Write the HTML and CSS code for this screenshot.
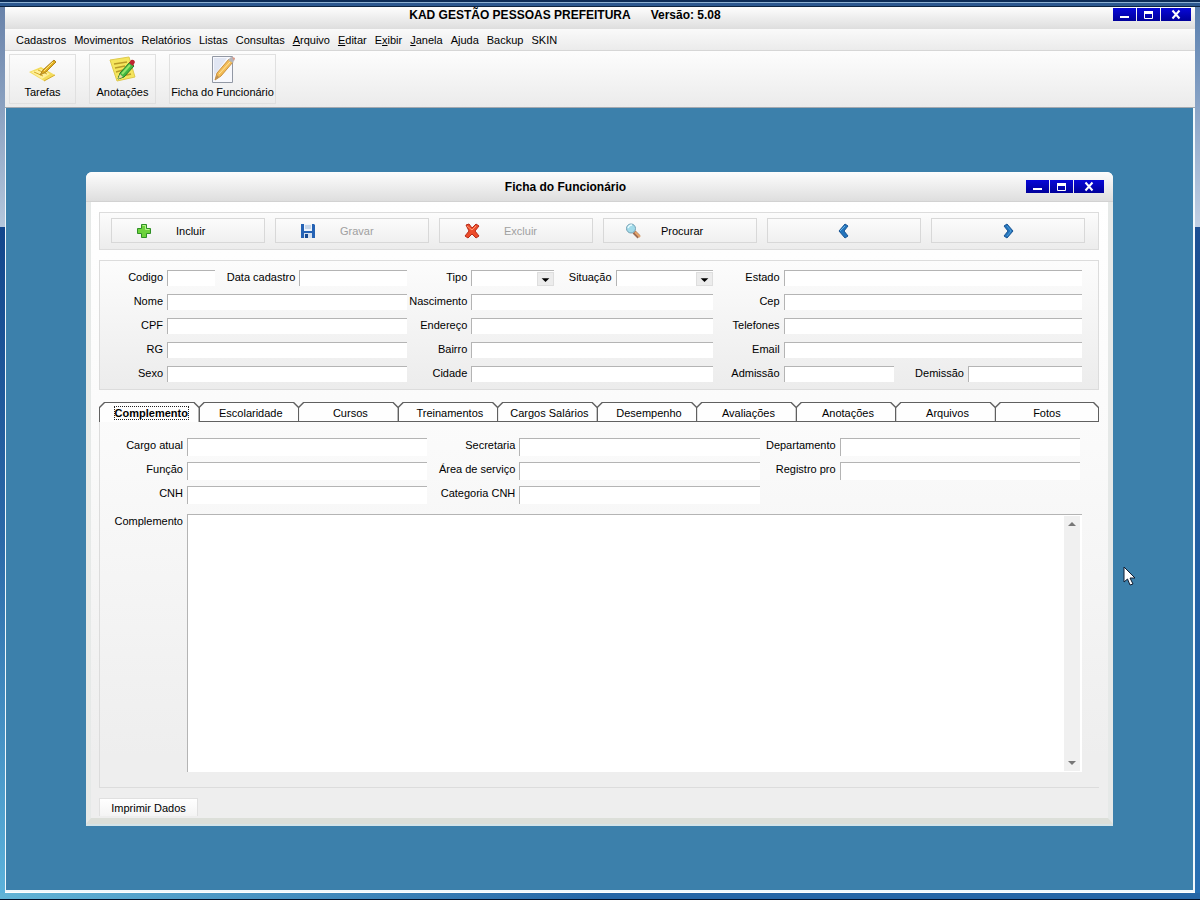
FILE: index.html
```html
<!DOCTYPE html>
<html lang="pt-BR">
<head>
<meta charset="utf-8">
<title>KAD Gestão Pessoas Prefeitura</title>
<link rel="stylesheet" href="styles.css">
</head>
<body>
<div class="app">
  <header class="titlebar">
    <h1 class="title"><span>KAD GESTÃO PESSOAS PREFEITURA</span><span>Versão: 5.08</span></h1>
    <div class="controls">
      <button class="control" type="button" aria-label="Minimizar"><svg width="23" height="13" viewBox="0 0 23 13"><path d="M7 9h9" stroke="#fff" stroke-width="2"/></svg></button>
      <button class="control" type="button" aria-label="Maximizar"><svg width="23" height="13" viewBox="0 0 23 13"><path d="M7.500 3v7.500h8V3" fill="none" stroke="#fff"/><path d="M7 4.500h9" stroke="#fff" stroke-width="3"/></svg></button>
      <button class="control close" type="button" aria-label="Fechar"><svg width="30" height="13" viewBox="0 0 30 13"><path d="M11.500 2.500l7 8M18.500 2.500l-7 8" stroke="#fff" stroke-width="2"/></svg></button>
    </div>
  </header>
  <nav class="menu">
    <a href="#">Cadastros</a><a href="#">Movimentos</a><a href="#">Relatórios</a><a href="#">Listas</a><a href="#">Consultas</a><a href="#"><u>A</u>rquivo</a><a href="#"><u>E</u>ditar</a><a href="#">E<u>x</u>ibir</a><a href="#"><u>J</u>anela</a><a href="#">Ajuda</a><a href="#">Backup</a><a href="#">SKIN</a>
  </nav>
  <div class="toolbar">
    <button class="tool" type="button">
      <svg width="30" height="28" viewBox="0 0 30 28"><path d="M1 16l12-5 14 8-11 6z" fill="#f3dc5c"/><path d="M3 16l10-3 9 5-8 5z" fill="#fff09a"/><path d="M6 16l9 4M10 14l9 4M16 25l11-6" stroke="#d5ab27" fill="none"/><path d="M26 4l2 2-10 10-6 3 3-5z" fill="#e0ad20" stroke="#b08422"/><path d="M25 6L16 15" stroke="#ffe878" stroke-width="1"/></svg>
      <span>Tarefas</span>
    </button>
    <button class="tool" type="button">
      <svg width="30" height="28" viewBox="0 0 30 28"><path d="M2 4l19-3 6 20-18 4z" fill="#f5e55d" stroke="#dec94e"/><path d="M6 8l13-2M7 12l10-2M8 16l7-2M10 21l13-3" stroke="#b99b28" stroke-width="1.500"/><path d="M10 23l2-6L22 6l4 4-10 11z" fill="#42b941" stroke="#267b28"/><path d="M21 7l2-3q3-1 4 2l-2 4z" fill="#bd2430"/><path d="M14 18l8-9" stroke="#94e46c" stroke-width="2"/><path d="M10 23l2-5 3 3z" fill="#e7d8a2"/></svg>
      <span>Anotações</span>
    </button>
    <button class="tool tool-wide" type="button">
      <svg width="30" height="28" viewBox="0 0 30 28"><path d="M4.500.5h20v26h-20z" fill="#f7f8fd" stroke="#9298a4"/><path d="M6 2h13L6 20z" fill="#e1e6f3"/><path d="M7 24l2-7L21 3l4 3-12 14z" fill="#f3bd57" stroke="#ca9040"/><path d="M11 18L22 6" stroke="#ffe4a2"/><path d="M20 4l3-3 4 1-2 5z" fill="#b4b5ba"/><path d="M24 1l3 1-1 3z" fill="#df9a86"/><path d="M7 24l2-5 2 2z" fill="#b99158"/></svg>
      <span>Ficha do Funcionário</span>
    </button>
  </div>

  <main class="desktop">
    <section class="window">
      <header class="titlebar window-title">
        <h2 class="title">Ficha do Funcionário</h2>
        <div class="controls">
          <button class="control" type="button" aria-label="Minimizar"><svg width="23" height="13" viewBox="0 0 23 13"><path d="M7 9h9" stroke="#fff" stroke-width="2"/></svg></button>
          <button class="control" type="button" aria-label="Maximizar"><svg width="23" height="13" viewBox="0 0 23 13"><path d="M7.500 3v7.500h8V3" fill="none" stroke="#fff"/><path d="M7 4.500h9" stroke="#fff" stroke-width="3"/></svg></button>
          <button class="control close" type="button" aria-label="Fechar"><svg width="30" height="13" viewBox="0 0 30 13"><path d="M11.500 2.500l7 8M18.500 2.500l-7 8" stroke="#fff" stroke-width="2"/></svg></button>
        </div>
      </header>
      <div class="window-body">
        <div class="panel actions">
          <button class="action" type="button"><svg width="16" height="16" viewBox="0 0 16 16"><path d="M5.500 1.500h5v4h4v5h-4v4h-5v-4h-4v-5h4z" fill="#6dd23c" stroke="#2f8f25"/><path d="M6.500 2.500h3v4h4" stroke="#b8f48c" fill="none"/></svg><span>Incluir</span></button>
          <button class="action" type="button" disabled><svg width="16" height="16" viewBox="0 0 16 16"><path d="M1 1h13l1 1v13H1z" fill="#2462b4"/><path d="M4 1h8v7H4z" fill="#eef4fb"/><path d="M5 3h6M5 5h6" stroke="#9db7d6"/><path d="M4 10h8v5H4z" fill="#d4e0ef"/><path d="M5 11h3v4H5z" fill="#174a91"/></svg><span>Gravar</span></button>
          <button class="action" type="button" disabled><svg width="16" height="16" viewBox="0 0 16 16"><path d="M2 2l3-1 3 4 4-4 3 2-4 5 4 5-3 2-4-4-4 4-3-2 4-5z" fill="#ec4c2a" stroke="#b72b19"/><path d="M3 3l5 4 4-4" fill="none" stroke="#ff9a73"/></svg><span>Excluir</span></button>
          <button class="action search" type="button"><svg width="16" height="16" viewBox="0 0 16 16"><path d="M9 9l5 5" stroke="#9c6b52" stroke-width="4"/><path d="M10 9l5 5" stroke="#e7a66c" stroke-width="2"/><circle cx="6" cy="5.500" r="4.500" fill="#a2dbea" stroke="#729fb2"/><path d="M3 5q1-3 4-3" stroke="#e6fbff" stroke-width="1.500" fill="none"/></svg><span>Procurar</span></button>
          <button class="action nav" type="button" aria-label="Anterior"><svg width="16" height="16" viewBox="0 0 16 16"><path d="M3 8l6-7 3 2-4 5 4 5-3 2z" fill="#2374bc" stroke="#1b5594"/><path d="M4 8l5-5" stroke="#68b4e7"/></svg></button>
          <button class="action nav" type="button" aria-label="Próximo"><svg width="16" height="16" viewBox="0 0 16 16"><path d="M13 8L7 1 4 3l4 5-4 5 3 2z" fill="#2374bc" stroke="#1b5594"/><path d="M7 3l4 5-4 5" stroke="#4d9dd8" fill="none"/></svg></button>
        </div>

        <form class="panel person">
          <label for="codigo">Codigo</label>
          <div class="cell"><input id="codigo" class="w-code"><label class="push" for="data">Data cadastro</label><input id="data" class="w-date"></div>
          <label for="tipo">Tipo</label>
          <div class="cell">
            <span class="pick w-tipo"><select id="tipo"><option></option></select><svg class="arrow" width="17" height="14" viewBox="0 0 17 14"><path d="M4 6h9L8.500 10.500z"/></svg></span>
            <label class="push" for="situacao">Situação</label>
            <span class="pick w-sit"><select id="situacao"><option></option></select><svg class="arrow" width="17" height="14" viewBox="0 0 17 14"><path d="M4 6h9L8.500 10.500z"/></svg></span>
          </div>
          <label for="estado">Estado</label><input id="estado">
          <label for="nome">Nome</label><input id="nome">
          <label for="nasc">Nascimento</label><input id="nasc">
          <label for="cep">Cep</label><input id="cep">
          <label for="cpf">CPF</label><input id="cpf">
          <label for="endereco">Endereço</label><input id="endereco">
          <label for="fones">Telefones</label><input id="fones">
          <label for="rg">RG</label><input id="rg">
          <label for="bairro">Bairro</label><input id="bairro">
          <label for="email">Email</label><input id="email">
          <label for="sexo">Sexo</label><input id="sexo">
          <label for="cidade">Cidade</label><input id="cidade">
          <label for="adm">Admissão</label>
          <div class="cell"><input id="adm" class="w-adm"><label class="push" for="dem">Demissão</label><input id="dem" class="w-dem"></div>
        </form>

        <div class="tabs" role="tablist">
          <button class="tab selected" type="button" role="tab" aria-selected="true"><span>Complemento</span></button>
          <button class="tab" type="button" role="tab">Escolaridade</button>
          <button class="tab" type="button" role="tab">Cursos</button>
          <button class="tab" type="button" role="tab">Treinamentos</button>
          <button class="tab" type="button" role="tab">Cargos Salários</button>
          <button class="tab" type="button" role="tab">Desempenho</button>
          <button class="tab" type="button" role="tab">Avaliações</button>
          <button class="tab" type="button" role="tab">Anotações</button>
          <button class="tab" type="button" role="tab">Arquivos</button>
          <button class="tab last" type="button" role="tab">Fotos</button>
        </div>
        <form class="tabpanel">
          <div class="job">
            <label for="cargo">Cargo atual</label><input id="cargo">
            <label for="secretaria">Secretaria</label><input id="secretaria">
            <label for="depto">Departamento</label><input id="depto">
            <label for="funcao">Função</label><input id="funcao">
            <label for="area">Área de serviço</label><input id="area">
            <label for="registro">Registro pro</label><input id="registro">
            <label for="cnh">CNH</label><input id="cnh">
            <label for="catcnh">Categoria CNH</label><input id="catcnh">
          </div>
          <div class="notes">
            <label for="compl">Complemento</label>
            <div class="memo">
              <textarea id="compl"></textarea>
              <div class="scroll" aria-hidden="true">
                <svg width="16" height="16" viewBox="0 0 16 16"><path d="M4 10h8L8 6z" fill="#777"/></svg>
                <svg width="16" height="16" viewBox="0 0 16 16"><path d="M4 6h8l-4 4z" fill="#777"/></svg>
              </div>
            </div>
          </div>
        </form>
        <button class="print" type="button">Imprimir Dados</button>
      </div>
    </section>
  </main>
</div>
<svg class="pointer" width="14" height="22" viewBox="0 0 14 22"><path d="M1 1v15l3.500-3 2.500 6 3-1-3-6h5z" fill="#fff" stroke="#101c30"/></svg>
</body>
</html>
```
FILE: styles.css
```css
* { box-sizing: border-box; }

body {
  margin: 0;
  font: 11px/16px "Liberation Sans", Arial, sans-serif;
  color: #000;
  background:
    linear-gradient(#0d2c57 0 2px, #8db0d2 2px 3px, #2c5890 3px 6px, #0c2340 6px) top / 100% 7px no-repeat,
    linear-gradient(#010f28, #010f28) bottom / 100% 1px no-repeat,
    linear-gradient(90deg, #62b4d6, #2566a6 50%) bottom / 100% 7px no-repeat,
    linear-gradient(#6680a8, #b3c6dc 227px, #12468c 227px, #2b69a8 60%, #5db4dc) left / 5px 100% no-repeat,
    linear-gradient(#577dad, #c0cfe3 227px, #1c4f93 227px, #2870b3) right / 5px 100% no-repeat;
}

button, input, select, textarea { font: inherit; color: inherit; margin: 0; padding: 0; border-radius: 0; }
button { border: 0; background: none; }
svg { display: block; flex: none; }

.app {
  display: flex;
  flex-direction: column;
  min-height: 100vh;
  border: solid transparent;
  border-width: 7px 5px 8px;
}

.titlebar {
  position: relative;
  display: flex;
  align-items: center;
  justify-content: center;
  height: 22px;
  background: linear-gradient(#fdfdfd, #dedede);
}
.title {
  display: flex;
  gap: 20px;
  margin: 0;
  padding: 0 70px 6px 0;
  font: bold 12px/16px "Liberation Sans", Arial, sans-serif;
}
.controls { position: absolute; top: 1px; right: 4px; display: flex; gap: 1px; }
.control { background: linear-gradient(#0808d8, #00009a); }

.menu {
  display: flex;
  gap: 8px;
  height: 22px;
  padding: 3px 11px;
  background: linear-gradient(#fafafa, #ebebeb);
  border-bottom: 1px solid #d6d6d6;
}
.menu a { color: inherit; text-decoration: none; }

.toolbar {
  display: flex;
  gap: 13px;
  padding: 3px 4px;
  background: linear-gradient(#fdfdfd, #ebebeb);
  border-bottom: 1px solid #a3a9b0;
}
.tool {
  display: flex;
  flex-direction: column;
  align-items: center;
  width: 67px;
  height: 50px;
  padding: 1px 0;
  border: 1px solid #e0e0e0;
  white-space: nowrap;
}
.tool-wide { width: 107px; }

.desktop {
  flex: 1;
  padding: 64px 80px;
  background: #3c80ab;
  border: solid #f0f8fc;
  border-width: 0 2px 2px 1px;
}

.window {
  background: #fdfdfd;
  border-radius: 6px 6px 0 0;
  border-bottom: 2px solid #d5e4e8;
}
.window-title { height: 30px; border-radius: 6px 6px 0 0; border-bottom: 1px solid #d2d2d2; }
.window-title .title { padding: 0 68px 0 0; }
.window-title .controls { top: 8px; right: 9px; }
.window-body {
  padding: 10px 9px 2px 8px;
  border: solid #e6e9e8;
  border-width: 0 5px 6px;
  border-bottom-color: #dcdfd9;
  background: linear-gradient(#fff, #fafafa 40%, #eee 90%);
}

.panel { border: 1px solid #dcdcdc; background: linear-gradient(#fcfcfc, #ececec); }

.actions {
  display: grid;
  grid-template-columns: repeat(6, 1fr);
  gap: 10px;
  padding: 5px 13px 6px 11px;
}
.action {
  display: flex;
  align-items: center;
  gap: 24px;
  height: 25px;
  padding: 0 0 0 24px;
  border: 1px solid #d8d8d8;
  background: linear-gradient(#fbfbfb, #f0f0f0);
}
.action:disabled { color: #a0a0a0; }
.action.search { gap: 20px; padding-left: 21px; }
.action.nav { justify-content: center; padding: 0; }

label { justify-self: end; line-height: 14px; white-space: nowrap; }
input, textarea, select {
  width: 100%;
  min-width: 0;
  background: #fff;
  border: 0 solid #b4b4b4;
  border-width: 1px 0 0 1px;
}
.person input, .person select { height: 16px; display: block; appearance: none; }

.person {
  display: grid;
  grid-template-columns: 63px minmax(0, 240fr) 56px minmax(0, 241fr) 63px minmax(0, 298fr);
  grid-auto-rows: 16px;
  gap: 8px 4px;
  margin-top: 10px;
  padding: 9px 16px 7px 0;
}
.cell { display: flex; gap: 4px; }
.push { margin-left: auto; }
.person .w-code { width: 48px; }
.person .w-date { width: 108px; }
.person .w-adm { width: 110px; }
.person .w-dem { width: 114px; }
.w-tipo { width: 83px; }
.w-sit { width: 97px; }
.pick { position: relative; }
.arrow { position: absolute; top: 2px; right: 0; background: #ececec; border: 1px solid #dedede; }

.tabs { display: flex; margin-top: 12px; }
.tab {
  position: relative;
  z-index: 0;
  flex: 100;
  min-width: 0;
  height: 20px;
  margin-right: -1px;
  padding: 2px 0 0 4px;
  background: #606060;
  clip-path: polygon(0 100%, 0 5px, 5px 0, calc(100% - 5px) 0, 100% 5px, 100% 100%);
  white-space: nowrap;
}
.tab::before {
  content: "";
  position: absolute;
  z-index: -1;
  inset: 1px;
  background: #fefefe;
  clip-path: polygon(0 100%, 0 5px, 5px 0, calc(100% - 5px) 0, 100% 5px, 100% 100%);
}
.tab.last { flex: 108; margin-right: 0; padding: 2px 0 0; }
.tab.selected { font: bold 11px/14px "Liberation Sans", Arial, sans-serif; }
.tab.selected::before { inset: 1px 1px 0; }
.tab.selected span { outline: 1px dotted #222; }

.tabpanel {
  padding: 16px 17px 15px 0;
  border: solid #dcdcdc;
  border-width: 0 0 1px 1px;
}
.job {
  display: grid;
  grid-template-columns: 83px minmax(0, 240fr) 84px minmax(0, 240fr) 72px minmax(0, 240fr);
  gap: 6px 4px;
  grid-auto-rows: 18px;
  padding-right: 2px;
}
.job input { height: 18px; }
.notes { display: grid; grid-template-columns: 83px 1fr; gap: 4px; margin-top: 10px; }
.memo { display: flex; height: 258px; background: #fff; border: solid #b4b4b4; border-width: 1px 0 0 1px; }
.memo textarea { border: 0; resize: none; outline: 0; }
.scroll {
  display: flex;
  flex-direction: column;
  justify-content: space-between;
  margin: 1px 2px;
  background: #f0f0f0;
}

.print {
  display: block;
  width: 99px;
  height: 18px;
  margin-top: 10px;
  background: linear-gradient(#fff, #f4f4f4);
  border: 1px solid #e0e0e0;
  border-bottom: 0;
}

.pointer { position: absolute; left: 1123px; top: 566px; }
```
